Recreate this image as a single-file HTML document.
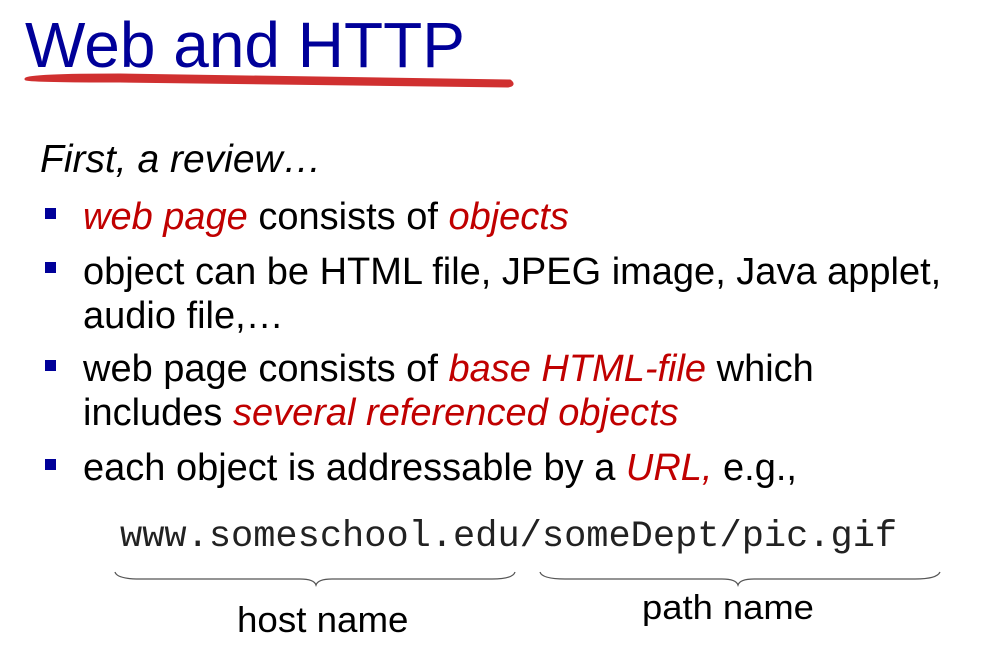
<!DOCTYPE html>
<html><head><meta charset="utf-8"><style>
body{margin:0;width:999px;height:648px;background:#fff;overflow:hidden;position:relative;font-family:"Liberation Sans",sans-serif}
.l{position:absolute;white-space:nowrap;font-size:38px;color:#000;line-height:1;transform-origin:0 0}
.r{color:#c00000;font-style:italic}
.b{position:absolute;left:45px;width:11px;height:11px;background:#000099}
</style></head><body>
<div class="l" style="left:25px;top:13px;font-size:64px;color:#000099;">Web and HTTP</div>
<svg style="position:absolute;left:0;top:0" width="999" height="648">
<path d="M26 79 Q30 75 120 75 L510 81 Q515 85 508 86 L120 81 Q35 81 26 79Z" fill="#d03030" stroke="#d03030" stroke-width="3" stroke-linejoin="round"/>
<path d="M115 572 Q117 579 140 579 L300 579 Q314 579 316 585 Q318 579 332 579 L492 579 Q513 579 515 572" fill="none" stroke="#555" stroke-width="1.3"/>
<path d="M540 572 Q542 579 565 579 L722 579 Q736 579 738 585 Q740 579 754 579 L915 579 Q937 579 940 572" fill="none" stroke="#555" stroke-width="1.3"/>
</svg>
<div class="l" style="left:40px;top:140px;font-style:italic;font-size:39px">First, a review…</div>
<div class="b" style="top:208px"></div>
<div class="l" style="left:83px;top:198px"><span class="r">web page</span> consists of <span class="r">objects</span></div>
<div class="b" style="top:262px"></div>
<div class="l" style="left:83px;top:253px">object can be HTML file, JPEG image, Java applet,</div>
<div class="l" style="left:83px;top:297px">audio file,…</div>
<div class="b" style="top:360px"></div>
<div class="l" style="left:83px;top:350px">web page consists of <span class="r">base HTML-file</span> which</div>
<div class="l" style="left:83px;top:394px">includes <span class="r">several referenced objects</span></div>
<div class="b" style="top:459px"></div>
<div class="l" style="left:83px;top:449px">each object is addressable by a <span class="r">URL,</span> e.g.,</div>
<div class="l" style="left:120px;top:519px;font-family:'Liberation Mono',monospace;font-size:37px;color:#222">www.someschool.edu/someDept/pic.gif</div>
<div class="l" style="left:237px;top:602px;font-size:36px;transform:scaleX(1.02)">host name</div>
<div class="l" style="left:642px;top:591px;font-size:34px;transform:scaleX(1.07)">path name</div>
</body></html>
